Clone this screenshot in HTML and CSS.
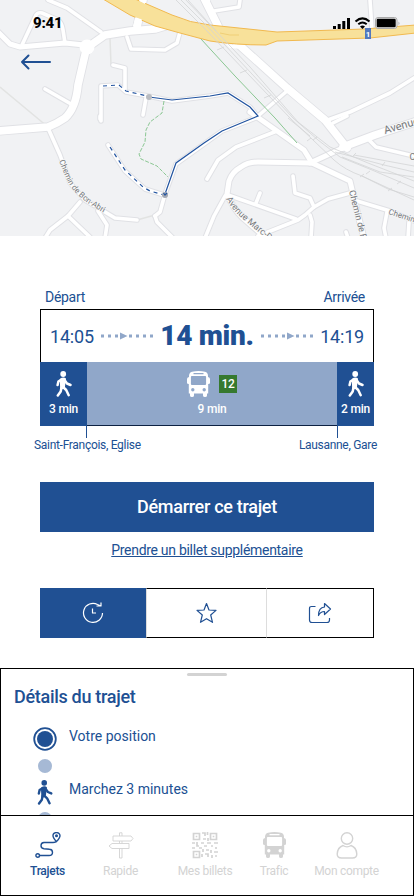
FILE: index.html
```
<!DOCTYPE html>
<html lang="fr">
<head>
    <meta charset="UTF-8">
    <meta name="viewport" content="width=device-width, initial-scale=1.0">
    <title>Trajet</title>
    <link rel="stylesheet" href="styles.css">
</head>
<body>
    <!-- shared icons -->
    <svg class="defs" width="0" height="0">
        <symbol id="walk" viewBox="0 0 16 26">
            <circle cx="7.200" cy="3" r="2.9"/>
            <path d="M5.500 8.500 L2.400 10.500 L1.600 14 M8.500 9 L11 12.500 L14.500 14 M6.500 15.500 L10.200 19 L12.700 24.200 M5.500 16.500 L4.700 20.500 L1.800 24.500" fill="none" stroke="currentColor" stroke-width="2.5" stroke-linecap="round" stroke-linejoin="round"/>
            <path d="M3.800 8 Q7.500 5.300 10 7.500 L9 15.500 L7.500 18 L4.200 18.500Z"/>
        </symbol>
        <symbol id="bus" viewBox="0 0 23 26">
            <path fill-rule="evenodd" d="M5 0.8 Q11.5 -0.8 18 0.8 Q21 1.5 21 5 V6 Q23 6.3 23 8 V12 Q23 13 21.2 13 V22.5 H20 V24.5 Q20 26 18 26 Q16 26 16 24.5 V22.5 H7 V24.5 Q7 26 5 26 Q3 26 3 24.5 V22.5 H1.8 V13 Q0 13 0 12 V8 Q0 6.3 2 6 V5 Q2 1.5 5 0.8Z M6.5 2 V3.3 H16.5 V2Z M4.8 5 Q3.9 5 3.9 6 V13 Q3.9 14 5 14 H18 Q19.1 14 19.1 13 V6 Q19.1 5 18.2 5Z M5.8 17 A1.7 1.7 0 1 0 5.8 20.4 A1.7 1.7 0 1 0 5.8 17Z M17.2 17 A1.7 1.7 0 1 0 17.2 20.4 A1.7 1.7 0 1 0 17.2 17Z"/>
        </symbol>
    </svg>

    <header class="map">
        <svg class="map-canvas" width="414" height="236" viewBox="0 0 414 236">
            <defs>
                <g id="roads">
                    <path d="M22 45 L36 15 Q38 12 42 13 L58 20 Q62 23 63 30 L65 43"/>
                    <path d="M48 0 L67 8 L101 32"/>
                    <path d="M127 37 L131 49 L165 50 L177 43 L180 32"/>
                    <path d="M45 89 L71 104"/>
                    <path d="M113 65 L125 68 L125 89"/>
                    <path d="M101 121 V86 L118 85 L126 92 L148 96 L172 101 L210 96 L228 93 L250 107 L258 117 L222 131 L204 144 L176 164 L165 194 L160 212 L155 216"/>
                    <path d="M146 98 L143 115"/>
                    <path d="M258 116 L287 91"/>
                    <path d="M214 11 L239 7 L240 0"/>
                    <path d="M370 0 L372 30"/>
                    <path d="M325 121 L350 112 L390 93 L414 78"/>
                    <path d="M333 123 L347 116"/>
                    <path d="M48 128 L60 155 L70 183 L85 200 L115 218 L137 220"/>
                    <path d="M108 145 L125 171 L145 189 L164 195"/>
                    <path d="M80 202 L68 216 L50 230 L45 238"/>
                    <path d="M68 216 L90 237"/>
                    <path d="M98 211 L107 225 L105 238"/>
                    <path d="M155 216 L157 222 L173 238"/>
                    <path d="M207 179 L218 160 L236 147 L277 131"/>
                    <path d="M293 176 L295 193 L310 198 L314 207 L305 215 L298 220 L258 236"/>
                    <path d="M314 207 L328 199 L350 193"/>
                    <path d="M228 195 L296 219 M256 203 L260 193"/>
                    <path d="M225 196 L214 216 L205 238"/>
                    <path d="M310 215 L312 222 L311 238"/>
                    <path d="M357 201 L390 211 L414 221"/>
                    <path d="M387 212 L384 228 L386 238 M409 222 L408 238 M346 232 L348 238"/>
                    <path d="M370 141 L376 147 L414 156"/>
                    <path d="M100 116 V119"/>
                </g>
                <g id="streets">
                    <path d="M-2 32 L10 44 L20 47 L65 43 L84 45"/>
                    <path d="M250 112 L304 150 L312 163 L350 181 L358 215 L364 238"/>
                    <path d="M312 163 L258 162 Q248 162 241 167 Q232 172 229 181 L227 194 Q233 208 242 217 L266 238"/>
                    <path d="M310 163 L345 147"/>
                </g>
                <g id="avenues">
                    <path d="M88 47 L105 35 L130 31 L155 29 L178 22"/>
                    <path d="M137 27 L143 0"/>
                    <path d="M87 46 L78 85 Q76 108 65 118 Q58 123 48 127 L-2 131"/>
                    <path d="M203 -4 L218 26 M236 42 L287 88 L325 120 L347 148"/>
                    <path d="M343 147 L375 135 L418 121"/>
                </g>
            </defs>
            <rect width="414" height="236" fill="#f1f2f4"/>
            <path class="lane" d="M0 87 L48 127 M110 38 L111 65 M137 220 L155 215"/>
            <use href="#roads" class="road-edge"/>
            <use href="#streets" class="street-edge"/>
            <use href="#avenues" class="avenue-edge"/>
            <use href="#roads" class="road"/>
            <use href="#streets" class="street"/>
            <use href="#avenues" class="avenue"/>
            <circle cx="87" cy="47" r="7.5" fill="#fff"/>
            <path d="M200 -2 L210 -2 V12Z" fill="#fff"/>

            <path class="highway" d="M103 -1 L130 15 L155 26 L180 33 L210 41 Q235 45 266 45 L277 41 L370 38 L416 33 V25 L364 29 L277 32 L210 25 Q190 23 172 15 L135 -1Z"/>
            <path d="M220 33 Q230 36 239 35" fill="none" stroke="#f0cf77"/>
            <path d="M133 26 L135.500 17 L142 19.500 L140 27Z M140 -1 H146 L145 4 L139 1Z M226 44 L236 45 L241 49 L230 48Z" fill="#fff"/>

            <g class="rail">
                <path d="M174 -2 L207 31 L290 118 L313 140 L334 160 Q345 170 362 176 L414 200"/>
                <path d="M179 -2 L210 29 L293 118 L318 140 L340 157 L372 170 L414 188"/>
                <path d="M184 -2 L213 28 L250 67 L298 122 L330 147 L368 163 L414 181"/>
                <path d="M188 0 L216 31 M288 118 L310 136 M335 152 L384 165 L414 172 M342 157 L380 172 L414 177 M354 155 L414 166 M362 176 L388 189 L414 197"/>
                <path d="M217 50 l7 -3 M240 73 l7 -3 M264 98 l7 -3 M307 141 l4 -3 M313 140 l4 -3 M352 157 l4 -4 M366 174 l4 -3 M382 166 l3 -4 M397 184 l4 -3 M388 191 l4 -3 M360 177 l4 -3"/>
            </g>
            <path class="park-line" d="M201 39 L235 76 L275 118 L297 143"/>
            <path class="park-path" d="M164 101 L162 113 L150 122 L146 130 L145 142 L139 154 L141 159 L157 166 L168 177"/>

            <path class="route walk-part" d="M103 86 L119 85 L126 91 L147 96"/>
            <path class="route walk-part" d="M110 147 L125 170 L143 187 L150 191 L164 195"/>
            <path class="route" d="M149 97 L172 100 L210 96 L228 93 L250 107 L258 116 L246 121 L222 131 L204 143 L176 163 L165 194"/>
            <circle cx="149" cy="97" r="3" fill="#b9bcc1"/>
            <circle cx="165" cy="195" r="3" fill="#a3a8b2"/>
            <path d="M163.500 193 L165 195 L167 193" class="route"/>

            <path id="bon-abri" d="M59 161 L66 178 Q70 188 78 195 Q88 205 112 217" fill="none"/>
            <path id="marc" d="M226 199 Q233 211 244 220 L290 258" fill="none"/>
            <g class="street-names">
                <text><textPath href="#bon-abri">Chemin de Bon-Abri</textPath></text>
                <text class="larger"><textPath href="#marc">Avenue Marc-D</textPath></text>
                <text class="larger" transform="translate(349 191) rotate(76)">Chemin de F</text>
                <text transform="translate(388 214) rotate(18)">Chemin</text>
                <text class="avenue-name" transform="translate(385 134) rotate(-16)">Avenue</text>
                <text class="larger" x="409.500" y="159.500">C</text>
            </g>
            <rect x="365" y="28" width="6" height="11" fill="#5278bd"/>
            <text x="368" y="37" class="shield">1</text>
        </svg>
        <div class="status-bar">
            <span class="clock">9:41</span>
            <svg width="68" height="14" viewBox="0 0 68 14">
                <path d="M0 10 h3 v3 h-3z M4.700 8 h3 v5 h-3z M9.300 5 h3 v8 h-3z M14 2 h3 v11 h-3z"/>
                <path d="M22.500 5.500 Q29.500 -.8 36.500 5.500 M25.300 8.300 Q29.500 4.700 33.700 8.300" fill="none" stroke="#000" stroke-width="2"/>
                <path d="M27 10.500 Q29.500 8.500 32 10.500 L29.500 13Z"/>
                <rect x="42.500" y="1.500" width="21.500" height="11" rx="2.500" fill="#eee" stroke="#aaa"/>
                <rect x="43.700" y="2.800" width="19" height="8.500" rx="1.200"/>
                <path d="M65.500 5.500 q2 1.800 0 3.500z" fill="#aaa"/>
            </svg>
        </div>
        <a class="back" href="#" aria-label="Retour">
            <svg width="32" height="16" viewBox="0 0 32 16"><path d="M30 8 H2 M8.500 1.500 L2 8 L8.500 14.500"/></svg>
        </a>
    </header>

    <main>
        <div class="ends">
            <span>Départ</span>
            <span>Arrivée</span>
        </div>
        <section class="trip">
            <div class="times">
                <span class="hour">14:05</span>
                <svg class="dots" width="52" height="8" viewBox="0 0 52 8"><path d="M0 2.500h3v3h-3z M7 2.500h3v3h-3z M14 2.500h3v3h-3z M19 .5 L26.500 4 L19 7.500Z M28 2.500h3v3h-3z M35 2.500h3v3h-3z M42 2.500h3v3h-3z M49 2.500h3v3h-3z"/></svg>
                <strong>14 min.</strong>
                <svg class="dots" width="52" height="8" viewBox="0 0 52 8"><path d="M0 2.500h3v3h-3z M7 2.500h3v3h-3z M14 2.500h3v3h-3z M21 2.500h3v3h-3z M26 .5 L33.500 4 L26 7.500Z M35 2.500h3v3h-3z M42 2.500h3v3h-3z M49 2.500h3v3h-3z"/></svg>
                <span class="hour">14:19</span>
            </div>
            <div class="segments">
                <div class="segment on-foot">
                    <svg class="icon" width="16" height="26"><use href="#walk"/></svg>
                    <span>3 min</span>
                </div>
                <div class="segment by-bus">
                    <div class="line">
                        <svg class="icon" width="23" height="26"><use href="#bus"/></svg>
                        <b>12</b>
                    </div>
                    <span>9 min</span>
                </div>
                <div class="segment on-foot last">
                    <svg class="icon" width="16" height="26"><use href="#walk"/></svg>
                    <span>2 min</span>
                </div>
            </div>
        </section>
        <div class="ticks"><i></i><i></i></div>
        <div class="stops">
            <span>Saint-François, Eglise</span>
            <span>Lausanne, Gare</span>
        </div>

        <button type="button" class="start">Démarrer ce trajet</button>
        <a class="extra" href="#">Prendre un billet supplémentaire</a>

        <div class="actions">
            <button type="button" class="active" aria-label="Horaire">
                <svg width="22" height="22" viewBox="0 0 22 22"><path d="M15.500 2.500 A9.500 9.500 0 1 0 20.500 11 M19 .5 V4 H14.500 M15.500 2.500 L19 4 M10.500 6.500 V11 H14"/></svg>
            </button>
            <button type="button" aria-label="Favori">
                <svg width="22" height="22" viewBox="0 0 22 22"><path d="M10.500 1.500 L13 8 L20 8.400 L14.700 13 L16.500 20.300 L10.500 16.700 L4.500 20.300 L6.300 13 L1 8.400 L8 8Z"/></svg>
            </button>
            <button type="button" aria-label="Partager">
                <svg width="24" height="22" viewBox="0 0 24 22"><path d="M7.500 4.500 H3.500 Q1.500 4.500 1.500 6.500 V18 Q1.500 20.500 4 20.500 H19 Q21.500 20.500 21.500 18 V16 M10.500 13.500 Q10.500 5.500 16.500 5 V1.500 L22.500 7 L16.500 12.500 V9.500 Q12.500 9.500 10.500 13.500Z"/></svg>
            </button>
        </div>
    </main>

    <section class="details">
        <div class="handle"></div>
        <h2>Détails du trajet</h2>
        <ul>
            <li class="position">
                <svg width="24" height="24" viewBox="0 0 24 24"><circle cx="12" cy="12" r="10.800" fill="none" stroke="currentColor" stroke-width="1.800"/><circle cx="12" cy="12" r="8"/></svg>
                <span>Votre position</span>
            </li>
            <li class="dot"><i></i></li>
            <li class="walking">
                <svg width="16" height="25"><use href="#walk"/></svg>
                <span>Marchez 3 minutes</span>
            </li>
            <li class="dot"><i></i></li>
        </ul>
    </section>

    <nav>
        <a class="current" href="#">
            <svg width="26" height="27" viewBox="0 0 26 27"><path d="M4.500 23.500 H14 Q17.500 23.500 17.500 20.500 Q17.500 17.500 14.500 17.300 L9 16.700 Q6 16.300 6 13.700 Q6 10.500 9 10.500 H18 Q21.500 10.500 21.500 8.500 M21.500 9.500 Q18 6 18 3.800 A3.500 3.200 0 0 1 25 3.800 Q25 6 21.500 9.500Z"/><circle cx="2.700" cy="23.500" r="1.800"/><circle cx="21.500" cy="3.800" r=".8"/></svg>
            <span>Trajets</span>
        </a>
        <a href="#">
            <svg width="26" height="27" viewBox="0 0 26 27" class="thin"><path d="M11.500 4 V.8 H14 V4 M5 4 H23 L25 6.500 L23 9 H5Z M11.500 9 V11.500 M14 9 V11.500 M4 11.500 H21 V16.500 H4 L1 14Z M11.500 16.500 V26 H14 V16.500"/></svg>
            <span>Rapide</span>
        </a>
        <a href="#">
            <svg width="26" height="27" viewBox="0 0 26 27" class="qr"><path d="M1.500 1.500h6v6h-6z M18.500 1.500h6v6h-6z M1.500 19.500h6v6h-6z M3.700 4.500h1.600 M20.700 4.500h1.600 M3.700 22.500h1.600 M10 1h3v3 M15.500 0v3 M11 7h3 M16 6v3 M0 11h3 M5 10v4h2 M9 11h3 M0 16h3 M7 16h3 M12 14h3 M15 11h4 M19 14h2 M22 11h4 M24 15v2 M11 17v3 M14 18h3 M19 18v3 M10 22v3 M13 22h3v3 M22 20h4 M20 23v3 M23 24h2"/></svg>
            <span>Mes billets</span>
        </a>
        <a href="#">
            <svg width="23" height="26" class="solid"><use href="#bus"/></svg>
            <span>Trafic</span>
        </a>
        <a href="#">
            <svg width="22" height="27" viewBox="0 0 22 27"><circle cx="11" cy="6.500" r="5.700"/><path d="M7 13.500 Q1.500 15.500 1.200 22 Q1.200 26 5.500 26 H16.500 Q20.800 26 20.800 22 Q20.500 15.500 15 13.500 Q11 16.200 7 13.500Z"/></svg>
            <span>Mon compte</span>
        </a>
    </nav>
</body>
</html>
```

FILE: styles.css
```
* {
    box-sizing: border-box;
}

body {
    margin: 0;
    width: 414px;
    height: 896px;
    display: flex;
    flex-direction: column;
    overflow: hidden;
    background-color: #fff;
    color: #205093;
    font-family: Roboto, sans-serif;
    letter-spacing: -0.3px;
}

a {
    color: inherit;
    text-decoration: none;
}

button {
    font-family: inherit;
    letter-spacing: inherit;
    cursor: pointer;
}

svg {
    display: block;
    flex: none;
}

.defs {
    position: absolute;
}

/* map */
.map {
    position: relative;
    height: 236px;
    flex: none;
    overflow: hidden;
    letter-spacing: 0;
}

.road-edge, .street-edge, .avenue-edge,
.road, .street, .avenue {
    fill: none;
    stroke-linecap: round;
    stroke-linejoin: round;
}

.road-edge, .street-edge, .avenue-edge {
    stroke: #e0e1e5;
}

.road, .street, .avenue {
    stroke: #fff;
}

.road-edge { stroke-width: 5.6; }
.street-edge { stroke-width: 7; }
.avenue-edge { stroke-width: 9.4; }
.road { stroke-width: 3.6; }
.street { stroke-width: 5; }
.avenue { stroke-width: 7.6; }

.lane {
    fill: none;
    stroke: #e2e3e2;
    stroke-width: 1.5;
}

.highway {
    fill: #f8e19a;
    stroke: #f1b94f;
    stroke-width: 1;
}

.rail {
    fill: none;
    stroke: #d3d4d6;
    stroke-width: 0.8;
}

.park-line, .park-path {
    fill: none;
    stroke: #8bc793;
    stroke-width: 1;
}

.park-path {
    stroke-dasharray: 4 1.5;
}

.route {
    fill: none;
    stroke: #2254a0;
    stroke-width: 1.2;
}

.walk-part {
    stroke-dasharray: 4 4;
}

.street-names {
    font-family: Roboto, sans-serif;
    font-size: 8px;
    fill: #77797c;
    stroke: #f5f6f7;
    stroke-width: 1.5;
    paint-order: stroke;
}

.larger {
    font-size: 9px;
}

.avenue-name {
    font-size: 11px;
}

.shield {
    font-size: 8px;
    font-weight: 700;
    fill: #fff;
    text-anchor: middle;
}

.status-bar {
    position: absolute;
    top: 13px;
    left: 33px;
    right: 13px;
    height: 20px;
    display: flex;
    align-items: center;
    justify-content: space-between;
    color: #000;
}

.clock {
    font-size: 15px;
    font-weight: 800;
    letter-spacing: -0.2px;
}

.back {
    position: absolute;
    top: 54px;
    left: 20px;
}

.back path {
    fill: none;
    stroke: #205093;
    stroke-width: 2;
    stroke-linecap: round;
    stroke-linejoin: round;
}

/* trip summary */
main {
    height: 432px;
    flex: none;
    padding: 52px 40px 0;
    display: flex;
    flex-direction: column;
}

.ends {
    display: flex;
    justify-content: space-between;
    height: 21px;
    padding: 0 9px 0 5px;
    font-size: 14px;
    line-height: 18px;
}

.trip {
    height: 117px;
    border: 1px solid #000;
    border-bottom: none;
}

.times {
    height: 52px;
    display: flex;
    align-items: center;
    justify-content: space-between;
    padding: 0 9px;
}

.hour {
    font-size: 18px;
    letter-spacing: -0.2px;
}

.times strong {
    font-size: 28px;
    font-weight: 900;
    line-height: 30px;
}

.dots {
    fill: #90a7c9;
}

.segments {
    display: flex;
    height: 64px;
    margin: 0 -1px;
    color: #fff;
    font-size: 12px;
    font-weight: 500;
    letter-spacing: -0.2px;
}

.segment {
    display: flex;
    flex-direction: column;
    align-items: center;
    padding-top: 9px;
    line-height: 14px;
    gap: 5px;
}

.icon {
    fill: currentColor;
}

.on-foot {
    width: 47px;
    background-color: #205093;
}

.last {
    width: 37px;
}

.by-bus {
    flex: 1;
    background-color: #90a7c9;
    border-bottom: 1px solid #0c2142;
}

.line {
    display: flex;
    align-items: center;
    gap: 9px;
    height: 26px;
}

.line b {
    width: 18px;
    height: 18px;
    background-color: #36792f;
    font-weight: 500;
    line-height: 18px;
    text-align: center;
}

.ticks {
    display: flex;
    justify-content: space-between;
    height: 12px;
    padding: 0 36px 0 46px;
}

.ticks i {
    width: 1px;
    background-color: #205093;
}

.stops {
    display: flex;
    justify-content: space-between;
    height: 44px;
    margin: 0 -3px 0 -6px;
    font-size: 12px;
    line-height: 14px;
}

.start {
    height: 50px;
    flex: none;
    border: none;
    background-color: #205093;
    color: #fff;
    font-size: 18px;
    font-weight: 500;
    padding-bottom: 2px;
}

.extra {
    align-self: center;
    margin-top: 9px;
    height: 47px;
    font-size: 14px;
    line-height: 18px;
    text-decoration: underline;
}

.actions {
    display: grid;
    grid-template-columns: 106px 120px 108px;
    height: 50px;
}

.actions button {
    display: flex;
    align-items: center;
    justify-content: center;
    padding: 0;
    border: 1px solid #000;
    border-left-color: #ddd;
    border-right: none;
    background-color: #fff;
    color: #205093;
}

.actions button:last-child {
    border-right: 1px solid #000;
}

.actions .active {
    border: none;
    background-color: #205093;
    color: #fff;
}

.actions path {
    fill: none;
    stroke: currentColor;
    stroke-width: 1.2;
    stroke-linejoin: round;
}

/* bottom sheet */
.details {
    height: 147px;
    flex: none;
    overflow: hidden;
    border: 1px solid #000;
    border-bottom: none;
    padding: 4px 13px 0;
}

.handle {
    width: 40px;
    height: 3px;
    margin: 0 auto;
    border-radius: 2px;
    background-color: #d3d3d3;
}

.details h2 {
    margin: 10px 0 19px;
    font-size: 18px;
    font-weight: 500;
    line-height: 22px;
}

.details ul {
    margin: 0;
    padding: 0;
    list-style: none;
    letter-spacing: 0;
}

.details li {
    display: grid;
    grid-template-columns: 62px 1fr;
    justify-items: center;
    font-size: 14px;
    line-height: 18px;
}

.details li span {
    justify-self: start;
    margin-left: -7px;
}

.details svg {
    fill: currentColor;
}

.position {
    height: 32px;
}

.dot {
    height: 21px;
}

.dot i {
    width: 14px;
    height: 14px;
    border-radius: 50%;
    background-color: #a6b9d5;
}

.walking {
    height: 32px;
}

/* tab bar */
nav {
    height: 81px;
    flex: none;
    display: grid;
    grid-template-columns: 69px 77px 92px 46px 99px;
    padding: 16px 0 0 12px;
    border: 1px solid #000;
    color: #d3d3d3;
    font-size: 12px;
}

nav a {
    height: 46px;
    display: flex;
    flex-direction: column;
    align-items: center;
    white-space: nowrap;
}

nav span {
    margin-top: auto;
    line-height: 14px;
}

nav svg {
    fill: none;
    stroke: currentColor;
    stroke-width: 1.4;
}

nav .thin {
    stroke-width: 0.9;
}

nav .qr {
    stroke-width: 1.7;
}

nav .solid {
    fill: currentColor;
    stroke: none;
}

.current {
    color: #205093;
    font-weight: 500;
}
```
